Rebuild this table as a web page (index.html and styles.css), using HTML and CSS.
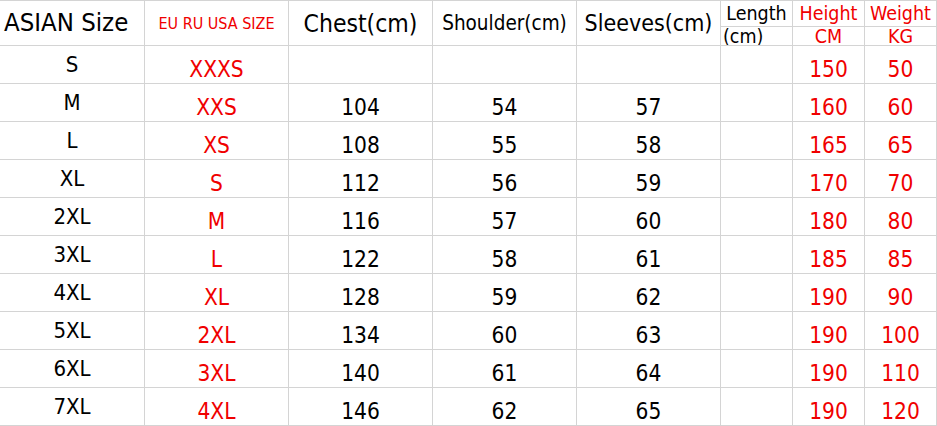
FILE: index.html
```html
<!DOCTYPE html>
<html lang="en">
<head>
<meta charset="utf-8">
<title>Size Chart</title>
<link rel="stylesheet" href="styles.css">
</head>
<body>
<div class="chart">
  <div class="cell head span2 h-asian">ASIAN Size</div>
  <div class="cell head span2 h-eu red">EU RU USA SIZE</div>
  <div class="cell head span2 h-chest">Chest(cm)</div>
  <div class="cell head span2 h-shoulder">Shoulder(cm)</div>
  <div class="cell head span2 h-sleeves">Sleeves(cm)</div>
  <div class="cell head top h-small">Length</div>
  <div class="cell head top h-small red">Height</div>
  <div class="cell head top h-small red">Weight</div>
  <div class="cell head bottom h-small left"><span>(cm)</span></div>
  <div class="cell head bottom h-small red"><span>CM</span></div>
  <div class="cell head bottom h-small red"><span>KG</span></div>

  <div class="cell size">S</div><div class="cell val red">XXXS</div><div class="cell val"></div><div class="cell val"></div><div class="cell val"></div><div class="cell val"></div><div class="cell val red">150</div><div class="cell val red">50</div>
  <div class="cell size">M</div><div class="cell val red">XXS</div><div class="cell val">104</div><div class="cell val">54</div><div class="cell val">57</div><div class="cell val"></div><div class="cell val red">160</div><div class="cell val red">60</div>
  <div class="cell size">L</div><div class="cell val red">XS</div><div class="cell val">108</div><div class="cell val">55</div><div class="cell val">58</div><div class="cell val"></div><div class="cell val red">165</div><div class="cell val red">65</div>
  <div class="cell size">XL</div><div class="cell val red">S</div><div class="cell val">112</div><div class="cell val">56</div><div class="cell val">59</div><div class="cell val"></div><div class="cell val red">170</div><div class="cell val red">70</div>
  <div class="cell size">2XL</div><div class="cell val red">M</div><div class="cell val">116</div><div class="cell val">57</div><div class="cell val">60</div><div class="cell val"></div><div class="cell val red">180</div><div class="cell val red">80</div>
  <div class="cell size">3XL</div><div class="cell val red">L</div><div class="cell val">122</div><div class="cell val">58</div><div class="cell val">61</div><div class="cell val"></div><div class="cell val red">185</div><div class="cell val red">85</div>
  <div class="cell size">4XL</div><div class="cell val red">XL</div><div class="cell val">128</div><div class="cell val">59</div><div class="cell val">62</div><div class="cell val"></div><div class="cell val red">190</div><div class="cell val red">90</div>
  <div class="cell size">5XL</div><div class="cell val red">2XL</div><div class="cell val">134</div><div class="cell val">60</div><div class="cell val">63</div><div class="cell val"></div><div class="cell val red">190</div><div class="cell val red">100</div>
  <div class="cell size">6XL</div><div class="cell val red">3XL</div><div class="cell val">140</div><div class="cell val">61</div><div class="cell val">64</div><div class="cell val"></div><div class="cell val red">190</div><div class="cell val red">110</div>
  <div class="cell size">7XL</div><div class="cell val red">4XL</div><div class="cell val">146</div><div class="cell val">62</div><div class="cell val">65</div><div class="cell val"></div><div class="cell val red">190</div><div class="cell val red">120</div>
</div>
</body>
</html>
```

FILE: styles.css
```css
html, body {
  margin: 0;
  padding: 0;
  background: #ffffff;
}

.chart {
  display: grid;
  grid-template-columns: 145px 144px 144px 144px 144px 72px 72px 72px;
  grid-template-rows: 26px 19px repeat(10, 38px);
  border-top: 1px solid #d4d4d4;
  font-family: "DejaVu Sans Condensed", "DejaVu Sans", sans-serif;
  color: #000000;
  width: 937px;
}

.cell {
  box-sizing: border-box;
  border-right: 1px solid #d4d4d4;
  border-bottom: 1px solid #d4d4d4;
  display: flex;
  align-items: center;
  justify-content: center;
  overflow: hidden;
  white-space: nowrap;
  line-height: 1;
}

.red {
  color: #f00000;
}

.span2 {
  grid-row: span 2;
}

.h-asian {
  font-size: 25.5px;
  justify-content: flex-start;
  padding-left: 4px;
}

.h-eu {
  font-size: 16px;
  padding-top: 1px;
}

.h-chest {
  font-size: 24.5px;
  padding-top: 2px;
}

.h-shoulder {
  font-size: 20.5px;
}

.h-sleeves {
  font-size: 23px;
  padding-top: 1px;
}

.h-small {
  font-size: 19.5px;
}

.top {
  padding-top: 1px;
}

.bottom {
  align-items: flex-end;
  overflow: visible;
}

.bottom span {
  display: block;
  line-height: 15px;
  padding-bottom: 1px;
}

.left {
  justify-content: flex-start;
  padding-left: 2px;
  overflow: hidden;
}

.size {
  font-size: 22px;
}

.val {
  font-size: 22.5px;
  padding-top: 9px;
}
```
